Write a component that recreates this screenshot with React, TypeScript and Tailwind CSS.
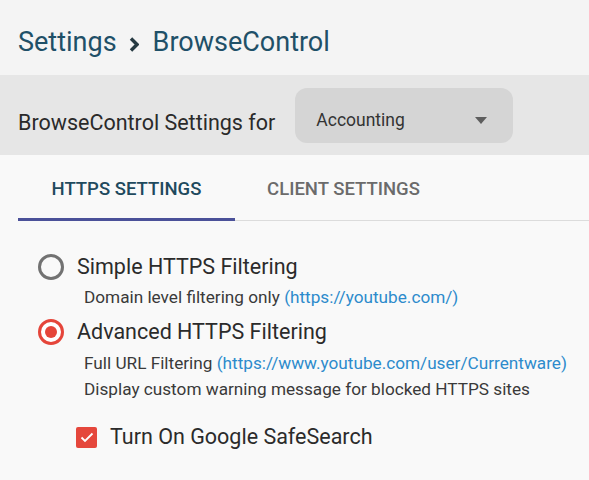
const font = { fontFamily: "Roboto, 'Liberation Sans', sans-serif" };

const Radio = ({ checked }: { checked: boolean }) =>
  checked ? (
    <div className="flex size-[26px] shrink-0 items-center justify-center rounded-full border-[3px] border-[#e5453a] bg-white">
      <div className="size-[12px] rounded-full bg-[#e5453a]" />
    </div>
  ) : (
    <div className="size-[26px] shrink-0 rounded-full border-[3px] border-[#727272]" />
  );

const Sub = ({ children }: { children: React.ReactNode }) => (
  <div className="pl-[84px] text-[17.2px] leading-[26px] text-[#3a3a3a]">{children}</div>
);

export default function App() {
  return (
    <div className="h-[480px] w-[589px] overflow-hidden bg-[#f9f9f9]" style={font}>
      <div className="flex h-[75px] items-start bg-[#f4f4f4] pl-[18px] pt-[26px] text-[27px] leading-[33px] text-[#1f5068]">
        <span>Settings</span>
        <svg className="ml-[12px] mr-[14px] mt-[11px]" width="10" height="15" viewBox="0 0 10 15">
          <path d="M2 1.5 L8 7.5 L2 13.5" fill="none" stroke="#263a42" strokeWidth="3.4" />
        </svg>
        <span>BrowseControl</span>
      </div>

      <div className="flex h-[80px] items-start bg-[#e6e6e6] pl-[18px]">
        <div className="mt-[35px] text-[21.5px] leading-[26px] text-[#2a2a2a]">BrowseControl Settings for</div>
        <div className="ml-[20px] mt-[13px] flex h-[55px] w-[218px] items-start justify-between rounded-[12px] bg-[#d5d5d5] pl-[21px] pr-[26px] pt-[20px]">
          <span className="text-[17.5px] leading-[24px] text-[#333]">Accounting</span>
          <svg className="mt-[9px]" width="12" height="7" viewBox="0 0 12 7">
            <path d="M0 0 H12 L6 7 Z" fill="#5e5e5e" />
          </svg>
        </div>
      </div>

      <div className="flex items-end pl-[18px] pt-[22px] text-[18.5px] font-medium leading-[24px]">
        <div className="w-[217px] border-b-[3px] border-[#4b5199] pb-[17px] text-center text-[#1f4a5e]">
          HTTPS SETTINGS
        </div>
        <div className="w-[217px] border-b border-[#dcdcdc] pb-[19px] text-center text-[#6b6b6b]">
          CLIENT SETTINGS
        </div>
        <div className="flex-1 border-b border-[#dcdcdc]" />
      </div>

      <div className="pt-[33px]">
        <div className="flex h-[26px] items-center gap-[13px] pl-[38px] text-[21.5px] text-[#2b2b2b]">
          <Radio checked={false} />
          <span>Simple HTTPS Filtering</span>
        </div>
        <div className="mt-[4px]">
          <Sub>
            Domain level filtering only <span className="text-[#2d8bcc]">(https://youtube.com/)</span>
          </Sub>
        </div>
        <div className="mt-[9px] flex h-[26px] items-center gap-[13px] pl-[38px] text-[21.5px] text-[#2b2b2b]">
          <Radio checked />
          <span>Advanced HTTPS Filtering</span>
        </div>
        <div className="mt-[5px]">
          <Sub>
            Full URL Filtering <span className="text-[#2d8bcc]">(https://www.youtube.com/user/Currentware)</span>
          </Sub>
          <Sub>Display custom warning message for blocked HTTPS sites</Sub>
        </div>
        <div className="mt-[22px] flex h-[26px] items-center gap-[13px] pl-[76px] text-[21.5px] text-[#2b2b2b]">
          <div className="flex size-[21px] items-center justify-center rounded-[2px] bg-[#e5473c]">
            <svg width="14" height="11" viewBox="0 0 14 11">
              <path d="M1.5 5.5 L5 9 L12.5 1.5" fill="none" stroke="#fff" strokeWidth="1.8" />
            </svg>
          </div>
          <span>Turn On Google SafeSearch</span>
        </div>
      </div>
    </div>
  );
}
